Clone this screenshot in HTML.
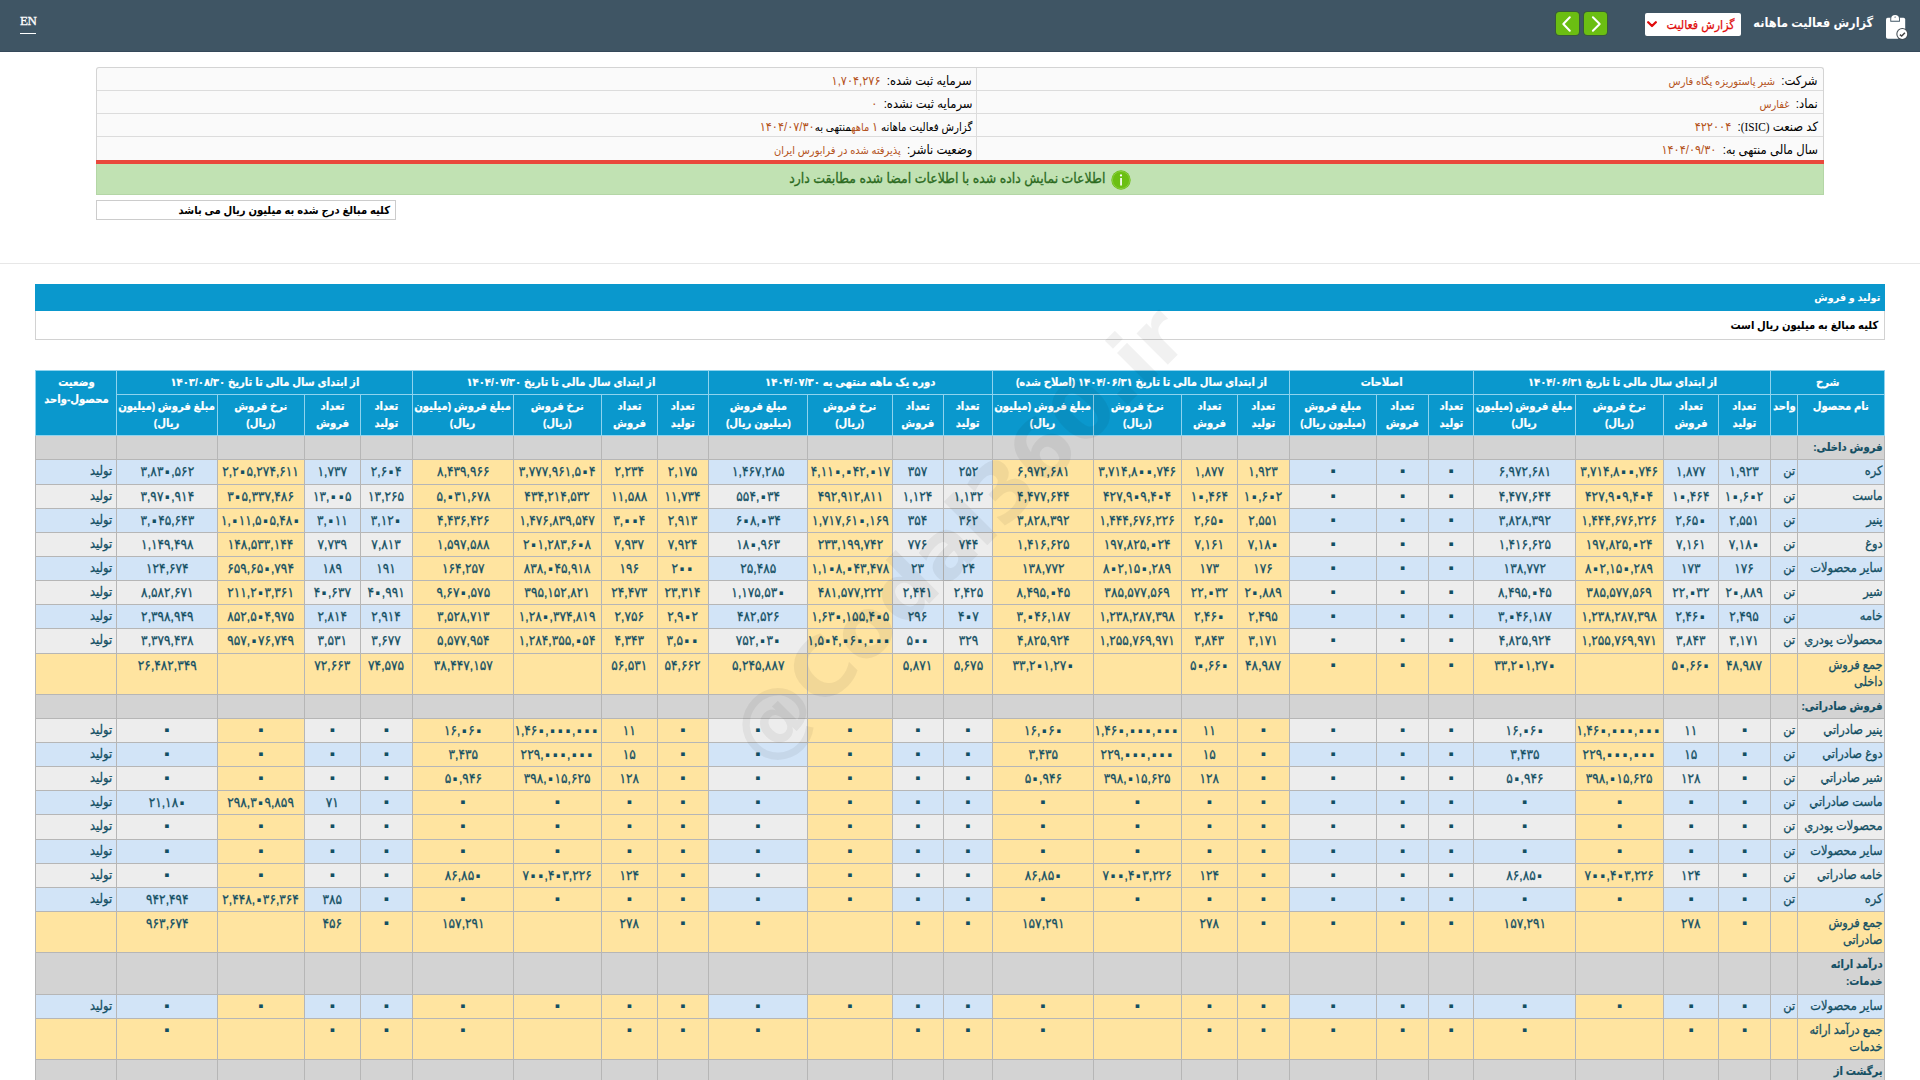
<!DOCTYPE html>
<html lang="fa" dir="rtl">
<head>
<meta charset="utf-8">
<title>گزارش فعالیت ماهانه</title>
<style>
html,body{margin:0;padding:0;background:#fff;}
body{width:1920px;height:1080px;overflow:hidden;position:relative;direction:rtl;
  font-family:"Liberation Sans","DejaVu Sans",sans-serif;font-size:12px;color:#000;}
.sx{transform:scaleX(.9);transform-origin:100% 50%;}
.x{width:111.1111%;margin:0 -5.5556%;transform:scaleX(.9);transform-origin:50% 50%;}
.abs{position:absolute;}
/* top bar */
#top{left:0;top:0;width:1920px;height:51px;background:#3f5564;border-bottom:1px solid #35495a;}
#en{left:20px;top:13px;width:16px;height:20px;border-bottom:1px solid #fff;color:#fff;direction:ltr;
  font-family:"Liberation Serif",serif;font-size:13px;line-height:15px;text-align:center;letter-spacing:-0.5px;-webkit-text-stroke:0.3px #fff;}
#ttl{right:47px;top:11px;color:#fff;font-weight:bold;font-size:12.65px;line-height:24px;white-space:nowrap;}
#ico{left:1885px;top:14px;width:23px;height:26px;}
#sel{left:1645px;top:13px;width:96px;height:23px;background:#fff;border-radius:2px;}
#sel span{position:absolute;right:6px;top:0;line-height:22px;color:#e00b0b;font-size:12.3px;-webkit-text-stroke:0.25px #e00b0b;padding-top:0.5px;white-space:nowrap;}
#sel svg{position:absolute;left:2px;top:8px;}
.gb{top:12px;width:23px;height:23px;background:#6bbe12;border-radius:3.5px;box-shadow:0 0 0 1px rgba(50,95,25,.55);}
/* info box */
#info{left:96px;top:67px;width:1728px;height:93px;box-sizing:border-box;background:#fafafa;border:1px solid #d4d4d4;border-bottom:none;border-radius:3px 3px 0 0;}
#info .r{position:absolute;left:0;right:0;height:23px;border-top:1px solid #dcdcdc;box-sizing:border-box;}
#info .r:first-child{border-top:none;}
#info .c{position:absolute;top:1px;height:100%;line-height:24px;white-space:nowrap;font-size:12.9px;}
#info .c1{right:5px;}
#info .c2{right:851px;}
#info .v{color:#b4531c;margin-right:7px;font-size:11px;}
#info .v.d{font-size:12.6px;}
#info .vd{position:absolute;left:879px;top:0;width:1px;height:93px;background:#dcdcdc;}
#red{left:96px;top:160px;width:1728px;height:4px;background:#e9483c;}
#ok{left:96px;top:164px;width:1728px;height:31px;background:#c1e2b3;box-sizing:border-box;border:1px solid #b4d6a6;border-top:none;}
#oktxt{right:718px;top:-1px;line-height:30px;font-size:13.87px;-webkit-text-stroke:0.3px #2b6a1e;color:#2b6a1e;white-space:nowrap;}
#okic{left:1014px;top:5.5px;width:20px;height:20px;}
#note{left:96px;top:200px;width:300px;height:20px;box-sizing:border-box;border:1px solid #ccc;background:#fff;}
#note span{position:absolute;right:5px;top:0;line-height:19px;font-weight:bold;font-size:11.15px;white-space:nowrap;}
#hr{left:0;top:263px;width:1920px;height:1px;background:#e7e7e7;}
/* section title */
#sect{left:35px;top:284px;width:1850px;height:27px;background:#0a98cd;}
#sect span{position:absolute;right:5px;top:0;line-height:27px;color:#fff;font-weight:bold;font-size:10.75px;white-space:nowrap;}
#sub{left:35px;top:311px;width:1850px;height:29px;box-sizing:border-box;border:1px solid #d2d2d2;border-top:none;background:#fff;}
#sub span{position:absolute;right:6px;top:0;line-height:28px;font-weight:bold;font-size:11.15px;white-space:nowrap;}
/* grid */
table.grid{position:absolute;left:35px;top:370px;width:1850px;border-collapse:collapse;table-layout:fixed;direction:rtl;
  font-size:13.5px;color:#134f63;-webkit-text-stroke:0.3px #134f63;}
table.grid th{background:#0a98cd;color:#fff;font-weight:bold;font-size:11.2px;line-height:17px;padding:3px 0;vertical-align:top;text-align:center;
  border:1px solid #8fd3ee;overflow:hidden;white-space:nowrap;-webkit-text-stroke:0.2px #fff;}
table.grid td{border:1px solid #b6b6b6;padding:3px 2px;text-align:center;vertical-align:top;line-height:17px;white-space:nowrap;overflow:hidden;}
table.grid td.nm{text-align:right;padding-right:2px;font-size:12.7px;}
table.grid td.st{text-align:right;padding-right:4px;font-size:12.7px;}
table.grid td.un{text-align:right;padding-right:2px;font-size:12.7px;}
td.b{background:#d2e4f7;}
td.g{background:#ededed;}
td.y{background:#ffe4a0;}
td.s{background:#d3d3d3;}
tr.sec td.nm{font-weight:bold;font-size:11.2px;-webkit-text-stroke:0.2px #134f63;}
table.grid td.z{font-size:21px;font-weight:bold;-webkit-text-stroke:0;padding-top:1px;padding-bottom:5px;}
.zz{font-size:21px;font-weight:bold;-webkit-text-stroke:0;line-height:0;margin:0 -2.1px;position:relative;top:2.2px;}
/* watermark */
#wm{left:958px;top:535px;width:0;height:0;}
#wm span{position:absolute;left:-400px;top:-60px;width:800px;height:120px;line-height:120px;text-align:center;direction:ltr;
  font-family:"DejaVu Sans",sans-serif;font-weight:bold;font-size:81px;color:rgba(0,0,0,0.055);transform:rotate(-45deg);white-space:nowrap;}
</style>
</head>
<body>
<div id="top" class="abs"></div>
<div id="en" class="abs">EN</div>
<svg id="ico" class="abs" viewBox="0 0 23 26">
  <rect x="1" y="3.8" width="19.2" height="21" rx="1.7" fill="#fff"/>
  <path d="M5.3 7.7 V4.6 a4.8 4.5 0 0 1 9.6 0 V7.7z" fill="#3f5564"/>
  <path d="M6.2 6.8 V4.7 a3.9 3.7 0 0 1 7.8 0 V6.8z" fill="#fff"/>
  <path d="M9.2 3.6 L10.1 2.3 L11 3.6z" fill="#3f5564"/>
  <circle cx="17.3" cy="20" r="6" fill="#444d54"/>
  <circle cx="17.3" cy="20" r="4.9" fill="#fff"/>
  <path d="M14.9 20.6 L16.7 22 L19.9 18.8" fill="none" stroke="#444" stroke-width="1.5"/>
</svg>
<div id="ttl" class="abs sx">گزارش فعالیت ماهانه</div>
<div id="sel" class="abs"><span class="sx">گزارش فعالیت</span>
  <svg width="10" height="7" viewBox="0 0 10 7"><path d="M1.2 1.3 L5 5 L8.8 1.3" fill="none" stroke="#e00b0b" stroke-width="2.3" stroke-linejoin="round" stroke-linecap="round"/></svg>
</div>
<div class="abs gb" style="left:1584px"><svg width="23" height="23" viewBox="0 0 23 23"><path d="M8.9 5.2 L15.7 12 L8.9 18.8" fill="none" stroke="#fff" stroke-width="2" stroke-linecap="round" stroke-linejoin="round"/></svg></div>
<div class="abs gb" style="left:1556px"><svg width="23" height="23" viewBox="0 0 23 23"><path d="M13.8 5.2 L7.3 12 L13.8 18.8" fill="none" stroke="#fff" stroke-width="2" stroke-linecap="round" stroke-linejoin="round"/></svg></div>

<div id="info" class="abs">
  <div class="r" style="top:0"><div class="c c1 sx">شرکت:<span class="v">شیر پاستوریزه پگاه فارس</span></div><div class="c c2 sx">سرمایه ثبت شده:<span class="v d">۱,۷۰۴,۲۷۶</span></div></div>
  <div class="r" style="top:22px"><div class="c c1 sx">نماد:<span class="v">غفارس</span></div><div class="c c2 sx">سرمایه ثبت نشده:<span class="v d">۰</span></div></div>
  <div class="r" style="top:45px"><div class="c c1 sx">کد صنعت <span style="font-family:'Liberation Serif',serif;font-size:12.5px">(ISIC)</span>:<span class="v d">۴۲۲۰۰۴</span></div><div class="c c2 sx" style="font-size:11.4px">گزارش فعالیت ماهانه <span class="v" style="margin:0"><span style="font-size:12.6px">۱</span> ماهه</span>منتهی به<span class="v d" style="margin:0">۱۴۰۴/۰۷/۳۰</span></div></div>
  <div class="r" style="top:68px"><div class="c c1 sx">سال مالی منتهی به:<span class="v d">۱۴۰۴/۰۹/۳۰</span></div><div class="c c2 sx">وضعیت ناشر:<span class="v">پذیرفته شده در فرابورس ایران</span></div></div>
  <div class="vd"></div>
</div>
<div id="red" class="abs"></div>
<div id="ok" class="abs">
  <div id="oktxt" class="abs sx">اطلاعات نمایش داده شده با اطلاعات امضا شده مطابقت دارد</div>
  <svg id="okic" class="abs" viewBox="0 0 20 20"><circle cx="10" cy="10" r="9.7" fill="#6bbf12"/><circle cx="10" cy="10" r="8.6" fill="none" stroke="#8fd04a" stroke-width=".8"/><rect x="9.2" y="8" width="1.7" height="7.5" fill="#fff"/><circle cx="10" cy="5.4" r="1.1" fill="#fff"/></svg>
</div>
<div id="note" class="abs"><span class="sx">کلیه مبالغ درج شده به میلیون ریال می باشد</span></div>
<div id="hr" class="abs"></div>
<div id="sect" class="abs"><span class="sx">تولید و فروش</span></div>
<div id="sub" class="abs"><span class="sx">کلیه مبالغ به میلیون ریال است</span></div>
<table class="grid"><colgroup><col style="width:87px"><col style="width:27px"><col style="width:52px"><col style="width:55px"><col style="width:88px"><col style="width:102px"><col style="width:45px"><col style="width:52px"><col style="width:87px"><col style="width:52px"><col style="width:56px"><col style="width:88px"><col style="width:101px"><col style="width:49px"><col style="width:51px"><col style="width:85px"><col style="width:99px"><col style="width:51px"><col style="width:56px"><col style="width:88px"><col style="width:101px"><col style="width:52px"><col style="width:56px"><col style="width:87px"><col style="width:101px"><col style="width:81px"></colgroup><thead><tr style="height:24px"><th colspan="2"><div class="x">شرح</div></th><th colspan="4"><div class="x">از ابتدای سال مالی تا تاریخ ۱۴۰۴/۰۶/۳۱</div></th><th colspan="3"><div class="x">اصلاحات</div></th><th colspan="4"><div class="x">از ابتدای سال مالی تا تاریخ ۱۴۰۴/۰۶/۳۱ (اصلاح شده)</div></th><th colspan="4"><div class="x">دوره یک ماهه منتهی به ۱۴۰۴/۰۷/۳۰</div></th><th colspan="4"><div class="x">از ابتدای سال مالی تا تاریخ ۱۴۰۴/۰۷/۳۰</div></th><th colspan="4"><div class="x">از ابتدای سال مالی تا تاریخ ۱۴۰۳/۰۸/۳۰</div></th><th rowspan="2"><div class="x">وضعیت<br>محصول-واحد</div></th></tr><tr style="height:41px"><th><div class="x">نام محصول</div></th><th><div class="x">واحد</div></th><th><div class="x">تعداد<br>تولید</div></th><th><div class="x">تعداد<br>فروش</div></th><th><div class="x">نرخ فروش<br>(ریال)</div></th><th><div class="x">مبلغ فروش (میلیون<br>ریال)</div></th><th><div class="x">تعداد<br>تولید</div></th><th><div class="x">تعداد<br>فروش</div></th><th><div class="x">مبلغ فروش<br>(میلیون ریال)</div></th><th><div class="x">تعداد<br>تولید</div></th><th><div class="x">تعداد<br>فروش</div></th><th><div class="x">نرخ فروش<br>(ریال)</div></th><th><div class="x">مبلغ فروش (میلیون<br>ریال)</div></th><th><div class="x">تعداد<br>تولید</div></th><th><div class="x">تعداد<br>فروش</div></th><th><div class="x">نرخ فروش<br>(ریال)</div></th><th><div class="x">مبلغ فروش<br>(میلیون ریال)</div></th><th><div class="x">تعداد<br>تولید</div></th><th><div class="x">تعداد<br>فروش</div></th><th><div class="x">نرخ فروش<br>(ریال)</div></th><th><div class="x">مبلغ فروش (میلیون<br>ریال)</div></th><th><div class="x">تعداد<br>تولید</div></th><th><div class="x">تعداد<br>فروش</div></th><th><div class="x">نرخ فروش<br>(ریال)</div></th><th><div class="x">مبلغ فروش (میلیون<br>ریال)</div></th></tr></thead><tbody><tr class="sec" style="height:24px"><td class="s nm"><div class="x">فروش داخلی:</div></td><td class="s"></td><td class="s"></td><td class="s"></td><td class="s"></td><td class="s"></td><td class="s"></td><td class="s"></td><td class="s"></td><td class="s"></td><td class="s"></td><td class="s"></td><td class="s"></td><td class="s"></td><td class="s"></td><td class="s"></td><td class="s"></td><td class="s"></td><td class="s"></td><td class="s"></td><td class="s"></td><td class="s"></td><td class="s"></td><td class="s"></td><td class="s"></td><td class="s"></td></tr>
<tr style="height:25px"><td class="b nm"><div class="x">کره</div></td><td class="b un"><div class="x">تن</div></td><td class="b"><div class="x">۱,۹۲۳</div></td><td class="b"><div class="x">۱,۸۷۷</div></td><td class="y"><div class="x">۳,۷۱۴,۸<span class="zz">۰</span><span class="zz">۰</span>,۷۴۶</div></td><td class="b"><div class="x">۶,۹۷۲,۶۸۱</div></td><td class="b z">۰</td><td class="b z">۰</td><td class="b z">۰</td><td class="y"><div class="x">۱,۹۲۳</div></td><td class="y"><div class="x">۱,۸۷۷</div></td><td class="y"><div class="x">۳,۷۱۴,۸<span class="zz">۰</span><span class="zz">۰</span>,۷۴۶</div></td><td class="y"><div class="x">۶,۹۷۲,۶۸۱</div></td><td class="b"><div class="x">۲۵۲</div></td><td class="b"><div class="x">۳۵۷</div></td><td class="y"><div class="x">۴,۱۱<span class="zz">۰</span>,<span class="zz">۰</span>۴۲,<span class="zz">۰</span>۱۷</div></td><td class="b"><div class="x">۱,۴۶۷,۲۸۵</div></td><td class="y"><div class="x">۲,۱۷۵</div></td><td class="y"><div class="x">۲,۲۳۴</div></td><td class="y"><div class="x">۳,۷۷۷,۹۶۱,۵<span class="zz">۰</span>۴</div></td><td class="y"><div class="x">۸,۴۳۹,۹۶۶</div></td><td class="b"><div class="x">۲,۶<span class="zz">۰</span>۴</div></td><td class="b"><div class="x">۱,۷۳۷</div></td><td class="y"><div class="x">۲,۲<span class="zz">۰</span>۵,۲۷۴,۶۱۱</div></td><td class="b"><div class="x">۳,۸۳<span class="zz">۰</span>,۵۶۲</div></td><td class="b st"><div class="x">تولید</div></td></tr>
<tr style="height:24px"><td class="g nm"><div class="x">ماست</div></td><td class="g un"><div class="x">تن</div></td><td class="g"><div class="x">۱<span class="zz">۰</span>,۶<span class="zz">۰</span>۲</div></td><td class="g"><div class="x">۱<span class="zz">۰</span>,۴۶۴</div></td><td class="y"><div class="x">۴۲۷,۹<span class="zz">۰</span>۹,۴<span class="zz">۰</span>۴</div></td><td class="g"><div class="x">۴,۴۷۷,۶۴۴</div></td><td class="g z">۰</td><td class="g z">۰</td><td class="g z">۰</td><td class="y"><div class="x">۱<span class="zz">۰</span>,۶<span class="zz">۰</span>۲</div></td><td class="y"><div class="x">۱<span class="zz">۰</span>,۴۶۴</div></td><td class="y"><div class="x">۴۲۷,۹<span class="zz">۰</span>۹,۴<span class="zz">۰</span>۴</div></td><td class="y"><div class="x">۴,۴۷۷,۶۴۴</div></td><td class="g"><div class="x">۱,۱۳۲</div></td><td class="g"><div class="x">۱,۱۲۴</div></td><td class="y"><div class="x">۴۹۲,۹۱۲,۸۱۱</div></td><td class="g"><div class="x">۵۵۴,<span class="zz">۰</span>۳۴</div></td><td class="y"><div class="x">۱۱,۷۳۴</div></td><td class="y"><div class="x">۱۱,۵۸۸</div></td><td class="y"><div class="x">۴۳۴,۲۱۴,۵۳۲</div></td><td class="y"><div class="x">۵,<span class="zz">۰</span>۳۱,۶۷۸</div></td><td class="g"><div class="x">۱۳,۲۶۵</div></td><td class="g"><div class="x">۱۳,<span class="zz">۰</span><span class="zz">۰</span>۵</div></td><td class="y"><div class="x">۳<span class="zz">۰</span>۵,۳۳۷,۴۸۶</div></td><td class="g"><div class="x">۳,۹۷<span class="zz">۰</span>,۹۱۴</div></td><td class="g st"><div class="x">تولید</div></td></tr>
<tr style="height:24px"><td class="b nm"><div class="x">پنیر</div></td><td class="b un"><div class="x">تن</div></td><td class="b"><div class="x">۲,۵۵۱</div></td><td class="b"><div class="x">۲,۶۵<span class="zz">۰</span></div></td><td class="y"><div class="x">۱,۴۴۴,۶۷۶,۲۲۶</div></td><td class="b"><div class="x">۳,۸۲۸,۳۹۲</div></td><td class="b z">۰</td><td class="b z">۰</td><td class="b z">۰</td><td class="y"><div class="x">۲,۵۵۱</div></td><td class="y"><div class="x">۲,۶۵<span class="zz">۰</span></div></td><td class="y"><div class="x">۱,۴۴۴,۶۷۶,۲۲۶</div></td><td class="y"><div class="x">۳,۸۲۸,۳۹۲</div></td><td class="b"><div class="x">۳۶۲</div></td><td class="b"><div class="x">۳۵۴</div></td><td class="y"><div class="x">۱,۷۱۷,۶۱<span class="zz">۰</span>,۱۶۹</div></td><td class="b"><div class="x">۶<span class="zz">۰</span>۸,<span class="zz">۰</span>۳۴</div></td><td class="y"><div class="x">۲,۹۱۳</div></td><td class="y"><div class="x">۳,<span class="zz">۰</span><span class="zz">۰</span>۴</div></td><td class="y"><div class="x">۱,۴۷۶,۸۳۹,۵۴۷</div></td><td class="y"><div class="x">۴,۴۳۶,۴۲۶</div></td><td class="b"><div class="x">۳,۱۲<span class="zz">۰</span></div></td><td class="b"><div class="x">۳,<span class="zz">۰</span>۱۱</div></td><td class="y"><div class="x">۱,<span class="zz">۰</span>۱۱,۵<span class="zz">۰</span>۵,۴۸<span class="zz">۰</span></div></td><td class="b"><div class="x">۳,<span class="zz">۰</span>۴۵,۶۴۳</div></td><td class="b st"><div class="x">تولید</div></td></tr>
<tr style="height:24px"><td class="g nm"><div class="x">دوغ</div></td><td class="g un"><div class="x">تن</div></td><td class="g"><div class="x">۷,۱۸<span class="zz">۰</span></div></td><td class="g"><div class="x">۷,۱۶۱</div></td><td class="y"><div class="x">۱۹۷,۸۲۵,<span class="zz">۰</span>۲۴</div></td><td class="g"><div class="x">۱,۴۱۶,۶۲۵</div></td><td class="g z">۰</td><td class="g z">۰</td><td class="g z">۰</td><td class="y"><div class="x">۷,۱۸<span class="zz">۰</span></div></td><td class="y"><div class="x">۷,۱۶۱</div></td><td class="y"><div class="x">۱۹۷,۸۲۵,<span class="zz">۰</span>۲۴</div></td><td class="y"><div class="x">۱,۴۱۶,۶۲۵</div></td><td class="g"><div class="x">۷۴۴</div></td><td class="g"><div class="x">۷۷۶</div></td><td class="y"><div class="x">۲۳۳,۱۹۹,۷۴۲</div></td><td class="g"><div class="x">۱۸<span class="zz">۰</span>,۹۶۳</div></td><td class="y"><div class="x">۷,۹۲۴</div></td><td class="y"><div class="x">۷,۹۳۷</div></td><td class="y"><div class="x">۲<span class="zz">۰</span>۱,۲۸۳,۶<span class="zz">۰</span>۸</div></td><td class="y"><div class="x">۱,۵۹۷,۵۸۸</div></td><td class="g"><div class="x">۷,۸۱۳</div></td><td class="g"><div class="x">۷,۷۳۹</div></td><td class="y"><div class="x">۱۴۸,۵۳۳,۱۴۴</div></td><td class="g"><div class="x">۱,۱۴۹,۴۹۸</div></td><td class="g st"><div class="x">تولید</div></td></tr>
<tr style="height:24px"><td class="b nm"><div class="x">سایر محصولات</div></td><td class="b un"><div class="x">تن</div></td><td class="b"><div class="x">۱۷۶</div></td><td class="b"><div class="x">۱۷۳</div></td><td class="y"><div class="x">۸<span class="zz">۰</span>۲,۱۵<span class="zz">۰</span>,۲۸۹</div></td><td class="b"><div class="x">۱۳۸,۷۷۲</div></td><td class="b z">۰</td><td class="b z">۰</td><td class="b z">۰</td><td class="y"><div class="x">۱۷۶</div></td><td class="y"><div class="x">۱۷۳</div></td><td class="y"><div class="x">۸<span class="zz">۰</span>۲,۱۵<span class="zz">۰</span>,۲۸۹</div></td><td class="y"><div class="x">۱۳۸,۷۷۲</div></td><td class="b"><div class="x">۲۴</div></td><td class="b"><div class="x">۲۳</div></td><td class="y"><div class="x">۱,۱<span class="zz">۰</span>۸,<span class="zz">۰</span>۴۳,۴۷۸</div></td><td class="b"><div class="x">۲۵,۴۸۵</div></td><td class="y"><div class="x">۲<span class="zz">۰</span><span class="zz">۰</span></div></td><td class="y"><div class="x">۱۹۶</div></td><td class="y"><div class="x">۸۳۸,<span class="zz">۰</span>۴۵,۹۱۸</div></td><td class="y"><div class="x">۱۶۴,۲۵۷</div></td><td class="b"><div class="x">۱۹۱</div></td><td class="b"><div class="x">۱۸۹</div></td><td class="y"><div class="x">۶۵۹,۶۵<span class="zz">۰</span>,۷۹۴</div></td><td class="b"><div class="x">۱۲۴,۶۷۴</div></td><td class="b st"><div class="x">تولید</div></td></tr>
<tr style="height:24px"><td class="g nm"><div class="x">شیر</div></td><td class="g un"><div class="x">تن</div></td><td class="g"><div class="x">۲<span class="zz">۰</span>,۸۸۹</div></td><td class="g"><div class="x">۲۲,<span class="zz">۰</span>۳۲</div></td><td class="y"><div class="x">۳۸۵,۵۷۷,۵۶۹</div></td><td class="g"><div class="x">۸,۴۹۵,<span class="zz">۰</span>۴۵</div></td><td class="g z">۰</td><td class="g z">۰</td><td class="g z">۰</td><td class="y"><div class="x">۲<span class="zz">۰</span>,۸۸۹</div></td><td class="y"><div class="x">۲۲,<span class="zz">۰</span>۳۲</div></td><td class="y"><div class="x">۳۸۵,۵۷۷,۵۶۹</div></td><td class="y"><div class="x">۸,۴۹۵,<span class="zz">۰</span>۴۵</div></td><td class="g"><div class="x">۲,۴۲۵</div></td><td class="g"><div class="x">۲,۴۴۱</div></td><td class="y"><div class="x">۴۸۱,۵۷۷,۲۲۲</div></td><td class="g"><div class="x">۱,۱۷۵,۵۳<span class="zz">۰</span></div></td><td class="y"><div class="x">۲۳,۳۱۴</div></td><td class="y"><div class="x">۲۴,۴۷۳</div></td><td class="y"><div class="x">۳۹۵,۱۵۲,۸۲۱</div></td><td class="y"><div class="x">۹,۶۷<span class="zz">۰</span>,۵۷۵</div></td><td class="g"><div class="x">۴<span class="zz">۰</span>,۹۹۱</div></td><td class="g"><div class="x">۴<span class="zz">۰</span>,۶۳۷</div></td><td class="y"><div class="x">۲۱۱,۲<span class="zz">۰</span>۳,۳۶۱</div></td><td class="g"><div class="x">۸,۵۸۲,۶۷۱</div></td><td class="g st"><div class="x">تولید</div></td></tr>
<tr style="height:24px"><td class="b nm"><div class="x">خامه</div></td><td class="b un"><div class="x">تن</div></td><td class="b"><div class="x">۲,۴۹۵</div></td><td class="b"><div class="x">۲,۴۶<span class="zz">۰</span></div></td><td class="y"><div class="x">۱,۲۳۸,۲۸۷,۳۹۸</div></td><td class="b"><div class="x">۳,<span class="zz">۰</span>۴۶,۱۸۷</div></td><td class="b z">۰</td><td class="b z">۰</td><td class="b z">۰</td><td class="y"><div class="x">۲,۴۹۵</div></td><td class="y"><div class="x">۲,۴۶<span class="zz">۰</span></div></td><td class="y"><div class="x">۱,۲۳۸,۲۸۷,۳۹۸</div></td><td class="y"><div class="x">۳,<span class="zz">۰</span>۴۶,۱۸۷</div></td><td class="b"><div class="x">۴<span class="zz">۰</span>۷</div></td><td class="b"><div class="x">۲۹۶</div></td><td class="y"><div class="x">۱,۶۳<span class="zz">۰</span>,۱۵۵,۴<span class="zz">۰</span>۵</div></td><td class="b"><div class="x">۴۸۲,۵۲۶</div></td><td class="y"><div class="x">۲,۹<span class="zz">۰</span>۲</div></td><td class="y"><div class="x">۲,۷۵۶</div></td><td class="y"><div class="x">۱,۲۸<span class="zz">۰</span>,۳۷۴,۸۱۹</div></td><td class="y"><div class="x">۳,۵۲۸,۷۱۳</div></td><td class="b"><div class="x">۲,۹۱۴</div></td><td class="b"><div class="x">۲,۸۱۴</div></td><td class="y"><div class="x">۸۵۲,۵<span class="zz">۰</span>۴,۹۷۵</div></td><td class="b"><div class="x">۲,۳۹۸,۹۴۹</div></td><td class="b st"><div class="x">تولید</div></td></tr>
<tr style="height:25px"><td class="g nm"><div class="x">محصولات پودري</div></td><td class="g un"><div class="x">تن</div></td><td class="g"><div class="x">۳,۱۷۱</div></td><td class="g"><div class="x">۳,۸۴۳</div></td><td class="y"><div class="x">۱,۲۵۵,۷۶۹,۹۷۱</div></td><td class="g"><div class="x">۴,۸۲۵,۹۲۴</div></td><td class="g z">۰</td><td class="g z">۰</td><td class="g z">۰</td><td class="y"><div class="x">۳,۱۷۱</div></td><td class="y"><div class="x">۳,۸۴۳</div></td><td class="y"><div class="x">۱,۲۵۵,۷۶۹,۹۷۱</div></td><td class="y"><div class="x">۴,۸۲۵,۹۲۴</div></td><td class="g"><div class="x">۳۲۹</div></td><td class="g"><div class="x">۵<span class="zz">۰</span><span class="zz">۰</span></div></td><td class="y"><div class="x">۱,۵<span class="zz">۰</span>۴,<span class="zz">۰</span>۶<span class="zz">۰</span>,<span class="zz">۰</span><span class="zz">۰</span><span class="zz">۰</span></div></td><td class="g"><div class="x">۷۵۲,<span class="zz">۰</span>۳<span class="zz">۰</span></div></td><td class="y"><div class="x">۳,۵<span class="zz">۰</span><span class="zz">۰</span></div></td><td class="y"><div class="x">۴,۳۴۳</div></td><td class="y"><div class="x">۱,۲۸۴,۳۵۵,<span class="zz">۰</span>۵۴</div></td><td class="y"><div class="x">۵,۵۷۷,۹۵۴</div></td><td class="g"><div class="x">۳,۶۷۷</div></td><td class="g"><div class="x">۳,۵۳۱</div></td><td class="y"><div class="x">۹۵۷,<span class="zz">۰</span>۷۶,۷۴۹</div></td><td class="g"><div class="x">۳,۳۷۹,۴۳۸</div></td><td class="g st"><div class="x">تولید</div></td></tr>
<tr class="tot" style="height:41px"><td class="y nm"><div class="x">جمع فروش<br>داخلی</div></td><td class="y"></td><td class="y"><div class="x">۴۸,۹۸۷</div></td><td class="y"><div class="x">۵<span class="zz">۰</span>,۶۶<span class="zz">۰</span></div></td><td class="y"></td><td class="y"><div class="x">۳۳,۲<span class="zz">۰</span>۱,۲۷<span class="zz">۰</span></div></td><td class="y z">۰</td><td class="y z">۰</td><td class="y z">۰</td><td class="y"><div class="x">۴۸,۹۸۷</div></td><td class="y"><div class="x">۵<span class="zz">۰</span>,۶۶<span class="zz">۰</span></div></td><td class="y"></td><td class="y"><div class="x">۳۳,۲<span class="zz">۰</span>۱,۲۷<span class="zz">۰</span></div></td><td class="y"><div class="x">۵,۶۷۵</div></td><td class="y"><div class="x">۵,۸۷۱</div></td><td class="y"></td><td class="y"><div class="x">۵,۲۴۵,۸۸۷</div></td><td class="y"><div class="x">۵۴,۶۶۲</div></td><td class="y"><div class="x">۵۶,۵۳۱</div></td><td class="y"></td><td class="y"><div class="x">۳۸,۴۴۷,۱۵۷</div></td><td class="y"><div class="x">۷۴,۵۷۵</div></td><td class="y"><div class="x">۷۲,۶۶۳</div></td><td class="y"></td><td class="y"><div class="x">۲۶,۴۸۲,۳۴۹</div></td><td class="y"></td></tr>
<tr class="sec" style="height:24px"><td class="s nm"><div class="x">فروش صادراتی:</div></td><td class="s"></td><td class="s"></td><td class="s"></td><td class="s"></td><td class="s"></td><td class="s"></td><td class="s"></td><td class="s"></td><td class="s"></td><td class="s"></td><td class="s"></td><td class="s"></td><td class="s"></td><td class="s"></td><td class="s"></td><td class="s"></td><td class="s"></td><td class="s"></td><td class="s"></td><td class="s"></td><td class="s"></td><td class="s"></td><td class="s"></td><td class="s"></td><td class="s"></td></tr>
<tr style="height:24px"><td class="g nm"><div class="x">پنیر صادراتي</div></td><td class="g un"><div class="x">تن</div></td><td class="g z">۰</td><td class="g"><div class="x">۱۱</div></td><td class="y"><div class="x">۱,۴۶<span class="zz">۰</span>,<span class="zz">۰</span><span class="zz">۰</span><span class="zz">۰</span>,<span class="zz">۰</span><span class="zz">۰</span><span class="zz">۰</span></div></td><td class="g"><div class="x">۱۶,<span class="zz">۰</span>۶<span class="zz">۰</span></div></td><td class="g z">۰</td><td class="g z">۰</td><td class="g z">۰</td><td class="y z">۰</td><td class="y"><div class="x">۱۱</div></td><td class="y"><div class="x">۱,۴۶<span class="zz">۰</span>,<span class="zz">۰</span><span class="zz">۰</span><span class="zz">۰</span>,<span class="zz">۰</span><span class="zz">۰</span><span class="zz">۰</span></div></td><td class="y"><div class="x">۱۶,<span class="zz">۰</span>۶<span class="zz">۰</span></div></td><td class="g z">۰</td><td class="g z">۰</td><td class="y z">۰</td><td class="g z">۰</td><td class="y z">۰</td><td class="y"><div class="x">۱۱</div></td><td class="y"><div class="x">۱,۴۶<span class="zz">۰</span>,<span class="zz">۰</span><span class="zz">۰</span><span class="zz">۰</span>,<span class="zz">۰</span><span class="zz">۰</span><span class="zz">۰</span></div></td><td class="y"><div class="x">۱۶,<span class="zz">۰</span>۶<span class="zz">۰</span></div></td><td class="g z">۰</td><td class="g z">۰</td><td class="y z">۰</td><td class="g z">۰</td><td class="g st"><div class="x">تولید</div></td></tr>
<tr style="height:24px"><td class="b nm"><div class="x">دوغ صادراتي</div></td><td class="b un"><div class="x">تن</div></td><td class="b z">۰</td><td class="b"><div class="x">۱۵</div></td><td class="y"><div class="x">۲۲۹,<span class="zz">۰</span><span class="zz">۰</span><span class="zz">۰</span>,<span class="zz">۰</span><span class="zz">۰</span><span class="zz">۰</span></div></td><td class="b"><div class="x">۳,۴۳۵</div></td><td class="b z">۰</td><td class="b z">۰</td><td class="b z">۰</td><td class="y z">۰</td><td class="y"><div class="x">۱۵</div></td><td class="y"><div class="x">۲۲۹,<span class="zz">۰</span><span class="zz">۰</span><span class="zz">۰</span>,<span class="zz">۰</span><span class="zz">۰</span><span class="zz">۰</span></div></td><td class="y"><div class="x">۳,۴۳۵</div></td><td class="b z">۰</td><td class="b z">۰</td><td class="y z">۰</td><td class="b z">۰</td><td class="y z">۰</td><td class="y"><div class="x">۱۵</div></td><td class="y"><div class="x">۲۲۹,<span class="zz">۰</span><span class="zz">۰</span><span class="zz">۰</span>,<span class="zz">۰</span><span class="zz">۰</span><span class="zz">۰</span></div></td><td class="y"><div class="x">۳,۴۳۵</div></td><td class="b z">۰</td><td class="b z">۰</td><td class="y z">۰</td><td class="b z">۰</td><td class="b st"><div class="x">تولید</div></td></tr>
<tr style="height:24px"><td class="g nm"><div class="x">شیر صادراتي</div></td><td class="g un"><div class="x">تن</div></td><td class="g z">۰</td><td class="g"><div class="x">۱۲۸</div></td><td class="y"><div class="x">۳۹۸,<span class="zz">۰</span>۱۵,۶۲۵</div></td><td class="g"><div class="x">۵<span class="zz">۰</span>,۹۴۶</div></td><td class="g z">۰</td><td class="g z">۰</td><td class="g z">۰</td><td class="y z">۰</td><td class="y"><div class="x">۱۲۸</div></td><td class="y"><div class="x">۳۹۸,<span class="zz">۰</span>۱۵,۶۲۵</div></td><td class="y"><div class="x">۵<span class="zz">۰</span>,۹۴۶</div></td><td class="g z">۰</td><td class="g z">۰</td><td class="y z">۰</td><td class="g z">۰</td><td class="y z">۰</td><td class="y"><div class="x">۱۲۸</div></td><td class="y"><div class="x">۳۹۸,<span class="zz">۰</span>۱۵,۶۲۵</div></td><td class="y"><div class="x">۵<span class="zz">۰</span>,۹۴۶</div></td><td class="g z">۰</td><td class="g z">۰</td><td class="y z">۰</td><td class="g z">۰</td><td class="g st"><div class="x">تولید</div></td></tr>
<tr style="height:24px"><td class="b nm"><div class="x">ماست صادراتي</div></td><td class="b un"><div class="x">تن</div></td><td class="b z">۰</td><td class="b z">۰</td><td class="y z">۰</td><td class="b z">۰</td><td class="b z">۰</td><td class="b z">۰</td><td class="b z">۰</td><td class="y z">۰</td><td class="y z">۰</td><td class="y z">۰</td><td class="y z">۰</td><td class="b z">۰</td><td class="b z">۰</td><td class="y z">۰</td><td class="b z">۰</td><td class="y z">۰</td><td class="y z">۰</td><td class="y z">۰</td><td class="y z">۰</td><td class="b z">۰</td><td class="b"><div class="x">۷۱</div></td><td class="y"><div class="x">۲۹۸,۳<span class="zz">۰</span>۹,۸۵۹</div></td><td class="b"><div class="x">۲۱,۱۸<span class="zz">۰</span></div></td><td class="b st"><div class="x">تولید</div></td></tr>
<tr style="height:25px"><td class="g nm"><div class="x">محصولات پودري</div></td><td class="g un"><div class="x">تن</div></td><td class="g z">۰</td><td class="g z">۰</td><td class="y z">۰</td><td class="g z">۰</td><td class="g z">۰</td><td class="g z">۰</td><td class="g z">۰</td><td class="y z">۰</td><td class="y z">۰</td><td class="y z">۰</td><td class="y z">۰</td><td class="g z">۰</td><td class="g z">۰</td><td class="y z">۰</td><td class="g z">۰</td><td class="y z">۰</td><td class="y z">۰</td><td class="y z">۰</td><td class="y z">۰</td><td class="g z">۰</td><td class="g z">۰</td><td class="y z">۰</td><td class="g z">۰</td><td class="g st"><div class="x">تولید</div></td></tr>
<tr style="height:24px"><td class="b nm"><div class="x">سایر محصولات</div></td><td class="b un"><div class="x">تن</div></td><td class="b z">۰</td><td class="b z">۰</td><td class="y z">۰</td><td class="b z">۰</td><td class="b z">۰</td><td class="b z">۰</td><td class="b z">۰</td><td class="y z">۰</td><td class="y z">۰</td><td class="y z">۰</td><td class="y z">۰</td><td class="b z">۰</td><td class="b z">۰</td><td class="y z">۰</td><td class="b z">۰</td><td class="y z">۰</td><td class="y z">۰</td><td class="y z">۰</td><td class="y z">۰</td><td class="b z">۰</td><td class="b z">۰</td><td class="y z">۰</td><td class="b z">۰</td><td class="b st"><div class="x">تولید</div></td></tr>
<tr style="height:24px"><td class="g nm"><div class="x">خامه صادراتي</div></td><td class="g un"><div class="x">تن</div></td><td class="g z">۰</td><td class="g"><div class="x">۱۲۴</div></td><td class="y"><div class="x">۷<span class="zz">۰</span><span class="zz">۰</span>,۴<span class="zz">۰</span>۳,۲۲۶</div></td><td class="g"><div class="x">۸۶,۸۵<span class="zz">۰</span></div></td><td class="g z">۰</td><td class="g z">۰</td><td class="g z">۰</td><td class="y z">۰</td><td class="y"><div class="x">۱۲۴</div></td><td class="y"><div class="x">۷<span class="zz">۰</span><span class="zz">۰</span>,۴<span class="zz">۰</span>۳,۲۲۶</div></td><td class="y"><div class="x">۸۶,۸۵<span class="zz">۰</span></div></td><td class="g z">۰</td><td class="g z">۰</td><td class="y z">۰</td><td class="g z">۰</td><td class="y z">۰</td><td class="y"><div class="x">۱۲۴</div></td><td class="y"><div class="x">۷<span class="zz">۰</span><span class="zz">۰</span>,۴<span class="zz">۰</span>۳,۲۲۶</div></td><td class="y"><div class="x">۸۶,۸۵<span class="zz">۰</span></div></td><td class="g z">۰</td><td class="g z">۰</td><td class="y z">۰</td><td class="g z">۰</td><td class="g st"><div class="x">تولید</div></td></tr>
<tr style="height:24px"><td class="b nm"><div class="x">کره</div></td><td class="b un"><div class="x">تن</div></td><td class="b z">۰</td><td class="b z">۰</td><td class="y z">۰</td><td class="b z">۰</td><td class="b z">۰</td><td class="b z">۰</td><td class="b z">۰</td><td class="y z">۰</td><td class="y z">۰</td><td class="y z">۰</td><td class="y z">۰</td><td class="b z">۰</td><td class="b z">۰</td><td class="y z">۰</td><td class="b z">۰</td><td class="y z">۰</td><td class="y z">۰</td><td class="y z">۰</td><td class="y z">۰</td><td class="b z">۰</td><td class="b"><div class="x">۳۸۵</div></td><td class="y"><div class="x">۲,۴۴۸,<span class="zz">۰</span>۳۶,۳۶۴</div></td><td class="b"><div class="x">۹۴۲,۴۹۴</div></td><td class="b st"><div class="x">تولید</div></td></tr>
<tr class="tot" style="height:41px"><td class="y nm"><div class="x">جمع فروش<br>صادراتی</div></td><td class="y"></td><td class="y z">۰</td><td class="y"><div class="x">۲۷۸</div></td><td class="y"></td><td class="y"><div class="x">۱۵۷,۲۹۱</div></td><td class="y z">۰</td><td class="y z">۰</td><td class="y z">۰</td><td class="y z">۰</td><td class="y"><div class="x">۲۷۸</div></td><td class="y"></td><td class="y"><div class="x">۱۵۷,۲۹۱</div></td><td class="y z">۰</td><td class="y z">۰</td><td class="y"></td><td class="y z">۰</td><td class="y z">۰</td><td class="y"><div class="x">۲۷۸</div></td><td class="y"></td><td class="y"><div class="x">۱۵۷,۲۹۱</div></td><td class="y z">۰</td><td class="y"><div class="x">۴۵۶</div></td><td class="y"></td><td class="y"><div class="x">۹۶۳,۶۷۴</div></td><td class="y"></td></tr>
<tr class="sec" style="height:42px"><td class="s nm"><div class="x">درآمد ارائه<br>خدمات:</div></td><td class="s"></td><td class="s"></td><td class="s"></td><td class="s"></td><td class="s"></td><td class="s"></td><td class="s"></td><td class="s"></td><td class="s"></td><td class="s"></td><td class="s"></td><td class="s"></td><td class="s"></td><td class="s"></td><td class="s"></td><td class="s"></td><td class="s"></td><td class="s"></td><td class="s"></td><td class="s"></td><td class="s"></td><td class="s"></td><td class="s"></td><td class="s"></td><td class="s"></td></tr>
<tr style="height:24px"><td class="b nm"><div class="x">سایر محصولات</div></td><td class="b un"><div class="x">تن</div></td><td class="b z">۰</td><td class="b z">۰</td><td class="y z">۰</td><td class="b z">۰</td><td class="b z">۰</td><td class="b z">۰</td><td class="b z">۰</td><td class="y z">۰</td><td class="y z">۰</td><td class="y z">۰</td><td class="y z">۰</td><td class="b z">۰</td><td class="b z">۰</td><td class="y z">۰</td><td class="b z">۰</td><td class="y z">۰</td><td class="y z">۰</td><td class="y z">۰</td><td class="y z">۰</td><td class="b z">۰</td><td class="b z">۰</td><td class="y z">۰</td><td class="b z">۰</td><td class="b st"><div class="x">تولید</div></td></tr>
<tr class="tot" style="height:41px"><td class="y nm"><div class="x">جمع درآمد ارائه<br>خدمات</div></td><td class="y"></td><td class="y z">۰</td><td class="y z">۰</td><td class="y"></td><td class="y z">۰</td><td class="y z">۰</td><td class="y z">۰</td><td class="y z">۰</td><td class="y z">۰</td><td class="y z">۰</td><td class="y"></td><td class="y z">۰</td><td class="y z">۰</td><td class="y z">۰</td><td class="y"></td><td class="y z">۰</td><td class="y z">۰</td><td class="y z">۰</td><td class="y"></td><td class="y z">۰</td><td class="y z">۰</td><td class="y z">۰</td><td class="y"></td><td class="y z">۰</td><td class="y"></td></tr>
<tr class="sec" style="height:42px"><td class="s nm"><div class="x">برگشت از<br>فروش:</div></td><td class="s"></td><td class="s"></td><td class="s"></td><td class="s"></td><td class="s"></td><td class="s"></td><td class="s"></td><td class="s"></td><td class="s"></td><td class="s"></td><td class="s"></td><td class="s"></td><td class="s"></td><td class="s"></td><td class="s"></td><td class="s"></td><td class="s"></td><td class="s"></td><td class="s"></td><td class="s"></td><td class="s"></td><td class="s"></td><td class="s"></td><td class="s"></td><td class="s"></td></tr></tbody></table>
<div id="wm" class="abs"><span>@Codal360.ir</span></div>
</body>
</html>
